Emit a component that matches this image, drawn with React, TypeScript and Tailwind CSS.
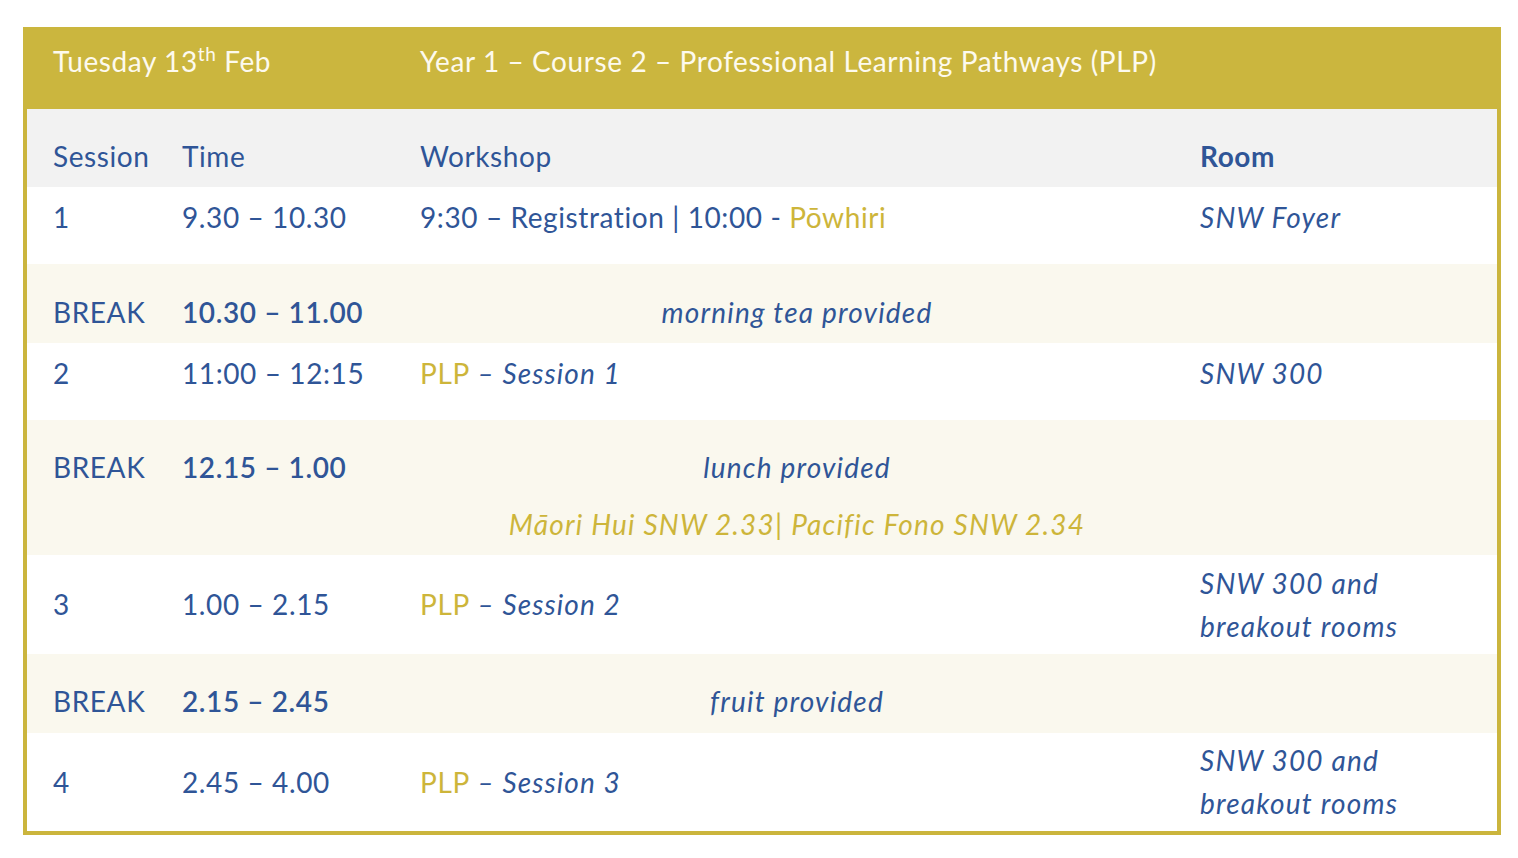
import React from 'react';

const font = { fontFamily: 'Lato, "Open Sans", sans-serif' };

const Plp: React.FC<{ n: number }> = ({ n }) => (
  <>
    <span className="text-[#cdb53a]">PLP</span>
    <span className="italic tracking-[1.1px]"> – Session {n}</span>
  </>
);

const App: React.FC = () => {
  const cell = 'pl-[26px]';
  const it = 'italic tracking-[1.2px]';
  return (
    <div className="min-h-screen bg-white pt-[27px] pl-[23px]" style={font}>
      <div className="w-[1478px] border-x-4 border-b-4 border-[#cbb53d] text-[28px] leading-[43px] tracking-[0.6px] text-[#2f5597]">
        {/* title band */}
        <div className="grid h-[82px] grid-cols-[129px_238px_780px_1fr] bg-[#cbb63e] pt-[13px] -mx-1 px-1 text-[#fdfaee]">
          <div className={`${cell} col-span-2`}>
            Tuesday 13<sup className="-top-[11px] text-[19px] leading-none">th</sup> Feb
          </div>
          <div className={`${cell} col-span-2`}>Year 1 – Course 2 – Professional Learning Pathways (PLP)</div>
        </div>

        {/* column headings */}
        <div className="grid h-[78px] grid-cols-[129px_238px_780px_1fr] bg-[#f2f2f2] pt-[26px]">
          <div className={cell}>Session</div>
          <div className={cell}>Time</div>
          <div className={cell}>Workshop</div>
          <div className={`${cell} font-bold`}>Room</div>
        </div>

        <div className="grid h-[77px] grid-cols-[129px_238px_780px_1fr] bg-white pt-[9px]">
          <div className={cell}>1</div>
          <div className={cell}>9.30 – 10.30</div>
          <div className={cell}>
            9:30 – Registration | 10:00 - <span className="text-[#cdb53a]">Pōwhiri</span>
          </div>
          <div className={`${cell} ${it}`}>SNW Foyer</div>
        </div>

        <div className="grid h-[79px] grid-cols-[129px_238px_780px_1fr] bg-[#faf8ee] pt-[27px]">
          <div className={cell}>BREAK</div>
          <div className={`${cell} font-semibold`}>10.30 – 11.00</div>
          <div className={`${cell} text-center ${it}`}>morning tea provided</div>
          <div />
        </div>

        <div className="grid h-[77px] grid-cols-[129px_238px_780px_1fr] bg-white pt-[9px]">
          <div className={cell}>2</div>
          <div className={cell}>11:00 – 12:15</div>
          <div className={cell}>
            <Plp n={1} />
          </div>
          <div className={`${cell} ${it}`}>SNW 300</div>
        </div>

        <div className="grid h-[135px] grid-cols-[129px_238px_780px_1fr] bg-[#faf8ee] pt-[26px]">
          <div className={cell}>BREAK</div>
          <div className={`${cell} font-semibold`}>12.15 – 1.00</div>
          <div className={`${cell} text-center ${it}`}>
            <p>lunch provided</p>
            <p className="mt-[14px] text-[#cdb53a]">Māori Hui SNW 2.33| Pacific Fono SNW 2.34</p>
          </div>
          <div />
        </div>

        <div className="grid h-[99px] grid-cols-[129px_238px_780px_1fr] items-center bg-white">
          <div className={cell}>3</div>
          <div className={cell}>1.00 – 2.15</div>
          <div className={cell}>
            <Plp n={2} />
          </div>
          <div className={`${cell} ${it}`}>
            SNW 300 and
            <br />
            breakout rooms
          </div>
        </div>

        <div className="grid h-[79px] grid-cols-[129px_238px_780px_1fr] bg-[#faf8ee] pt-[26px]">
          <div className={cell}>BREAK</div>
          <div className={`${cell} font-semibold`}>2.15 – 2.45</div>
          <div className={`${cell} text-center ${it}`}>fruit provided</div>
          <div />
        </div>

        <div className="grid h-[98px] grid-cols-[129px_238px_780px_1fr] items-center bg-white">
          <div className={cell}>4</div>
          <div className={cell}>2.45 – 4.00</div>
          <div className={cell}>
            <Plp n={3} />
          </div>
          <div className={`${cell} ${it}`}>
            SNW 300 and
            <br />
            breakout rooms
          </div>
        </div>
      </div>
    </div>
  );
};

export default App;
